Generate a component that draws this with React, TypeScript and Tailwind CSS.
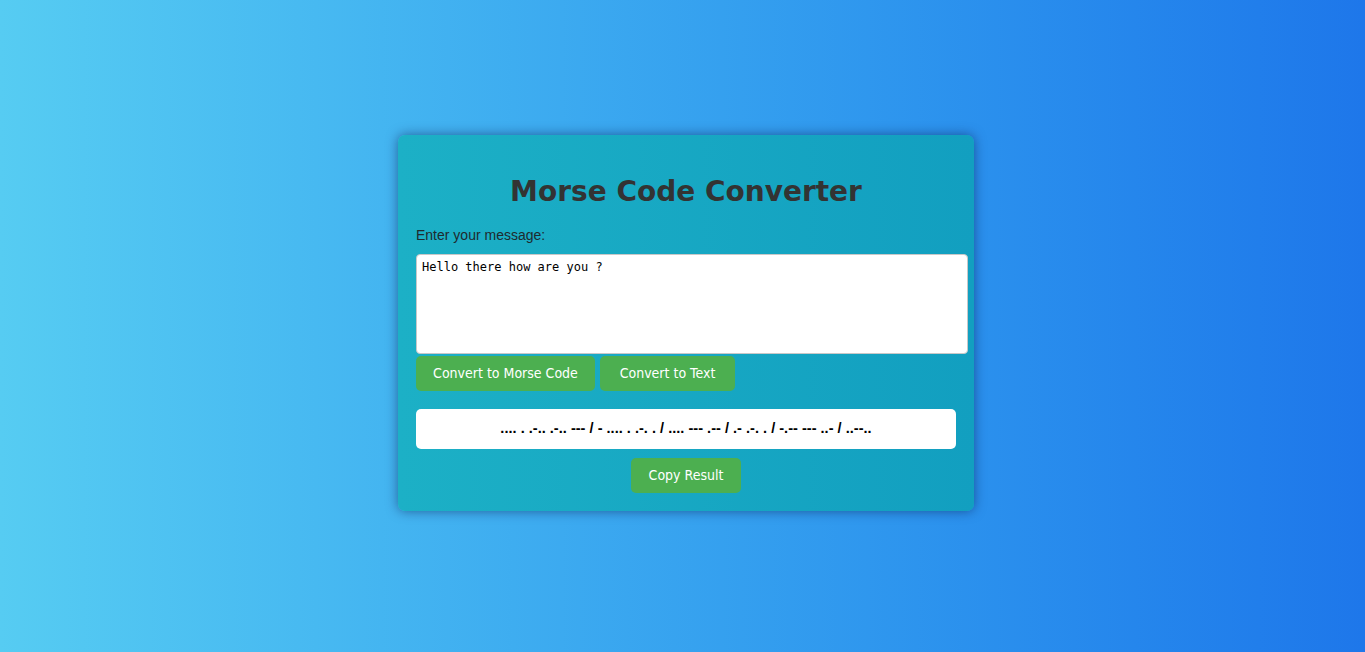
import React, { useState } from "react"

const MORSE = ".... . .-.. .-.. --- / - .... . .-. . / .... --- .-- / .- .-. . / -.-- --- ..- / ..--.."

function App() {
  const [message, setMessage] = useState("Hello there how are you ?")

  return (
    <div className="min-h-screen flex items-center justify-center pb-[6px] pl-[7px] bg-linear-to-r from-[#56ccf2] to-[#1e77ea] font-['Liberation_Sans',Arial,sans-serif]">
      <div className="w-[576px] p-[18px] rounded-[7px] bg-linear-to-r from-[#1cb0c6] to-[#129fc0] shadow-[0_0_12px_rgba(10,30,80,0.55)]">
        <h1 className="mt-[22px] mb-[19px] text-center text-[28px] leading-[33px] font-bold text-[#333333] font-['DejaVu_Sans',Verdana,sans-serif]">
          Morse Code Converter
        </h1>
        <label className="block text-[14px] leading-[16px] text-[#1f2a2e] mb-[11px]">
          Enter your message:
        </label>
        <textarea
          value={message}
          onChange={(e) => setMessage(e.target.value)}
          className="block w-[552px] h-[100px] px-[5px] py-[5px] bg-white border border-[#c8c8c8] rounded-[4px] resize-none text-[12px] leading-[14px] text-black font-['DejaVu_Sans_Mono',monospace] outline-none"
        />
        <div className="flex gap-[5px] mt-[2px]">
          <button className="w-[179px] h-[35px] rounded-[5px] bg-[#4caf50] text-white text-[14px] font-['DejaVu_Sans_Condensed','DejaVu_Sans',sans-serif]">
            Convert to Morse Code
          </button>
          <button className="w-[135px] h-[35px] rounded-[5px] bg-[#4caf50] text-white text-[14px] font-['DejaVu_Sans_Condensed','DejaVu_Sans',sans-serif]">
            Convert to Text
          </button>
        </div>
        <div className="mt-[18px] h-[40px] flex items-center justify-center bg-white rounded-[5px] text-[14.6px] font-bold text-black">
          {MORSE}
        </div>
        <div className="flex justify-center mt-[9px]">
          <button className="w-[110px] h-[35px] rounded-[5px] bg-[#4caf50] text-white text-[14px] font-['DejaVu_Sans_Condensed','DejaVu_Sans',sans-serif]">
            Copy Result
          </button>
        </div>
      </div>
    </div>
  )
}

export default App
